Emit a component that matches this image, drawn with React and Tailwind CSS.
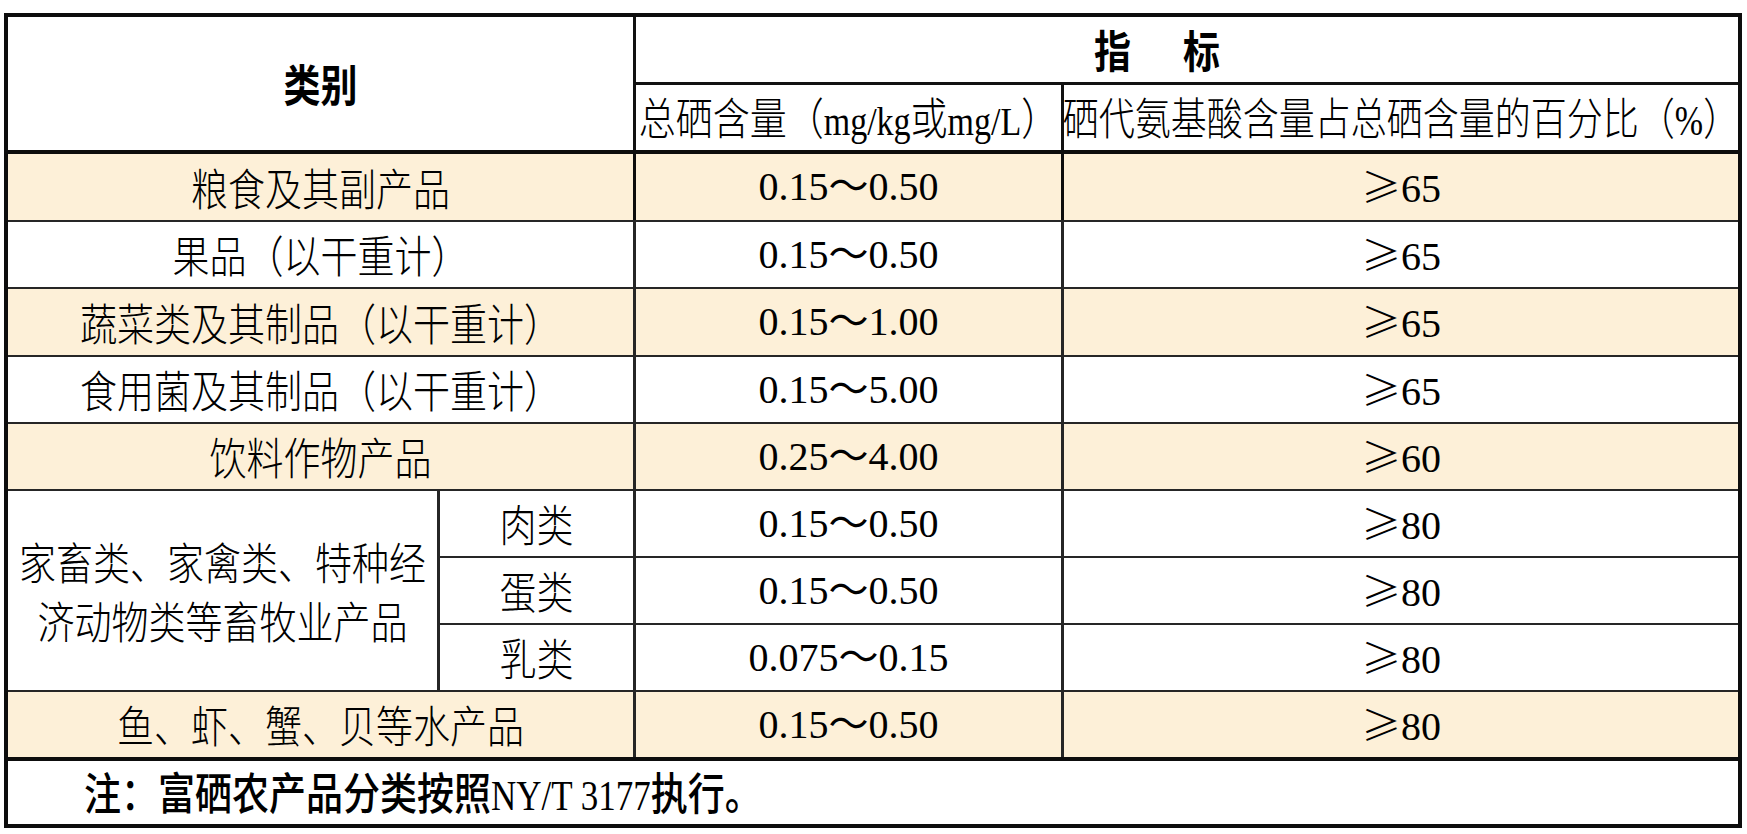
import React from 'react';

const rows = [
  { name: '粮食及其副产品', total: '0.15～0.50', pct: '65', hl: true },
  { name: '果品（以干重计）', total: '0.15～0.50', pct: '65' },
  { name: '蔬菜类及其制品（以干重计）', total: '0.15～1.00', pct: '65', hl: true },
  { name: '食用菌及其制品（以干重计）', total: '0.15～5.00', pct: '65' },
  { name: '饮料作物产品', total: '0.25～4.00', pct: '60', hl: true },
];

const animal = [
  { name: '肉类', total: '0.15～0.50', pct: '80' },
  { name: '蛋类', total: '0.15～0.50', pct: '80' },
  { name: '乳类', total: '0.075～0.15', pct: '80' },
];

// CJK glyphs in the source are taller than wide, so stretch vertically
const Cjk = ({ children, bold, small }) => (
  <span
    className={
      "inline-block whitespace-nowrap leading-none font-['Noto_Sans_CJK_SC',sans-serif] " +
      (small ? 'text-[36px] scale-y-[1.22] ' : 'text-[37px] scale-y-[1.19] ') +
      (bold ? 'font-bold' : 'font-light')
    }
  >
    {children}
  </span>
);

const Latin = ({ children }) => (
  <span className="font-['Liberation_Serif',serif] text-[34px]">{children}</span>
);

const Num = ({ children }) => (
  <span className="whitespace-nowrap text-[40px] leading-none font-['Liberation_Serif','Noto_Sans_CJK_SC',serif]">
    {children}
  </span>
);

const Pct = ({ value }) => (
  <span className="whitespace-nowrap text-[40px] leading-none font-['Liberation_Serif',serif]">
    <span className="font-['Noto_Sans_CJK_SC',sans-serif] font-light">≥</span>
    {value}
  </span>
);

const cell = 'flex items-center justify-center';

const App = () => {
  return (
    <div className="w-[1747px] h-[834px] bg-white pt-[13px] pl-[4px] text-black">
      <div className="w-[1738px] h-[815px] border-4 border-[#0d0d0d]">
        <div className="grid h-full grid-cols-[429px_196px_428px_677px] grid-rows-[65px_68px_70px_67px_68px_67px_67px_67px_67px_67px_67px_1fr]">
          {/* header */}
          <div className={`${cell} col-start-1 col-end-3 row-start-1 row-end-3`}>
            <Cjk bold>类别</Cjk>
          </div>
          <div className={`${cell} col-start-3 col-end-5 row-start-1 border-l-[3px] border-[#111] pr-[60px] gap-[52px]`}>
            <Cjk bold>指</Cjk>
            <Cjk bold>标</Cjk>
          </div>
          <div className={`${cell} col-start-3 row-start-2 border-l-[3px] border-t-[3px] border-[#111]`}>
            <Cjk>
              总硒含量（<Latin>mg/kg</Latin>或<Latin>mg/L</Latin>）
            </Cjk>
          </div>
          <div className={`${cell} col-start-4 row-start-2 border-l-[3px] border-t-[3px] border-[#111]`}>
            <Cjk small>
              硒代氨基酸含量占总硒含量的百分比（<Latin>%</Latin>）
            </Cjk>
          </div>

          {/* simple rows */}
          {rows.map((r, i) => {
            const top = i === 0 ? 'border-t-4 border-[#0d0d0d]' : 'border-t-2 border-[#262626]';
            const bg = r.hl ? 'bg-[#fdf0d8]' : 'bg-white';
            return (
              <React.Fragment key={r.name}>
                <div className={`${cell} col-start-1 col-end-3 ${top} ${bg}`}>
                  <Cjk>{r.name}</Cjk>
                </div>
                <div className={`${cell} col-start-3 border-l-[3px] ${top} ${bg}`}>
                  <Num>{r.total}</Num>
                </div>
                <div className={`${cell} col-start-4 border-l-[3px] ${top} ${bg}`}>
                  <Pct value={r.pct} />
                </div>
              </React.Fragment>
            );
          })}

          {/* livestock block */}
          <div className={`${cell} col-start-1 row-start-8 row-end-11 border-t-2 border-[#262626] flex-col gap-[22px]`}>
            <Cjk>家畜类、家禽类、特种经</Cjk>
            <Cjk>济动物类等畜牧业产品</Cjk>
          </div>
          {animal.map((a, i) => (
            <React.Fragment key={a.name}>
              <div className={`${cell} col-start-2 border-l-[3px] border-t-2 border-[#262626]`} style={{ gridRowStart: 8 + i }}>
                <Cjk>{a.name}</Cjk>
              </div>
              <div className={`${cell} col-start-3 border-l-[3px] border-t-2 border-[#262626]`} style={{ gridRowStart: 8 + i }}>
                <Num>{a.total}</Num>
              </div>
              <div className={`${cell} col-start-4 border-l-[3px] border-t-2 border-[#262626]`} style={{ gridRowStart: 8 + i }}>
                <Pct value={a.pct} />
              </div>
            </React.Fragment>
          ))}

          {/* aquatic */}
          <div className={`${cell} col-start-1 col-end-3 row-start-11 border-t-2 border-[#262626] bg-[#fdf0d8]`}>
            <Cjk>鱼、虾、蟹、贝等水产品</Cjk>
          </div>
          <div className={`${cell} col-start-3 row-start-11 border-l-[3px] border-t-2 border-[#262626] bg-[#fdf0d8]`}>
            <Num>0.15～0.50</Num>
          </div>
          <div className={`${cell} col-start-4 row-start-11 border-l-[3px] border-t-2 border-[#262626] bg-[#fdf0d8]`}>
            <Pct value="80" />
          </div>

          {/* note */}
          <div className="col-start-1 col-end-5 row-start-12 border-t-4 border-[#0d0d0d] flex items-center pl-[76px]">
            <span className="inline-block scale-y-[1.19] whitespace-nowrap text-[37px] leading-none font-['Noto_Sans_CJK_SC',sans-serif] font-medium">
              注：富硒农产品分类按照<span className="font-['Liberation_Serif',serif] font-normal text-[35px]">NY/T 3177</span>执行。
            </span>
          </div>
        </div>
      </div>
    </div>
  );
};

export default App;
